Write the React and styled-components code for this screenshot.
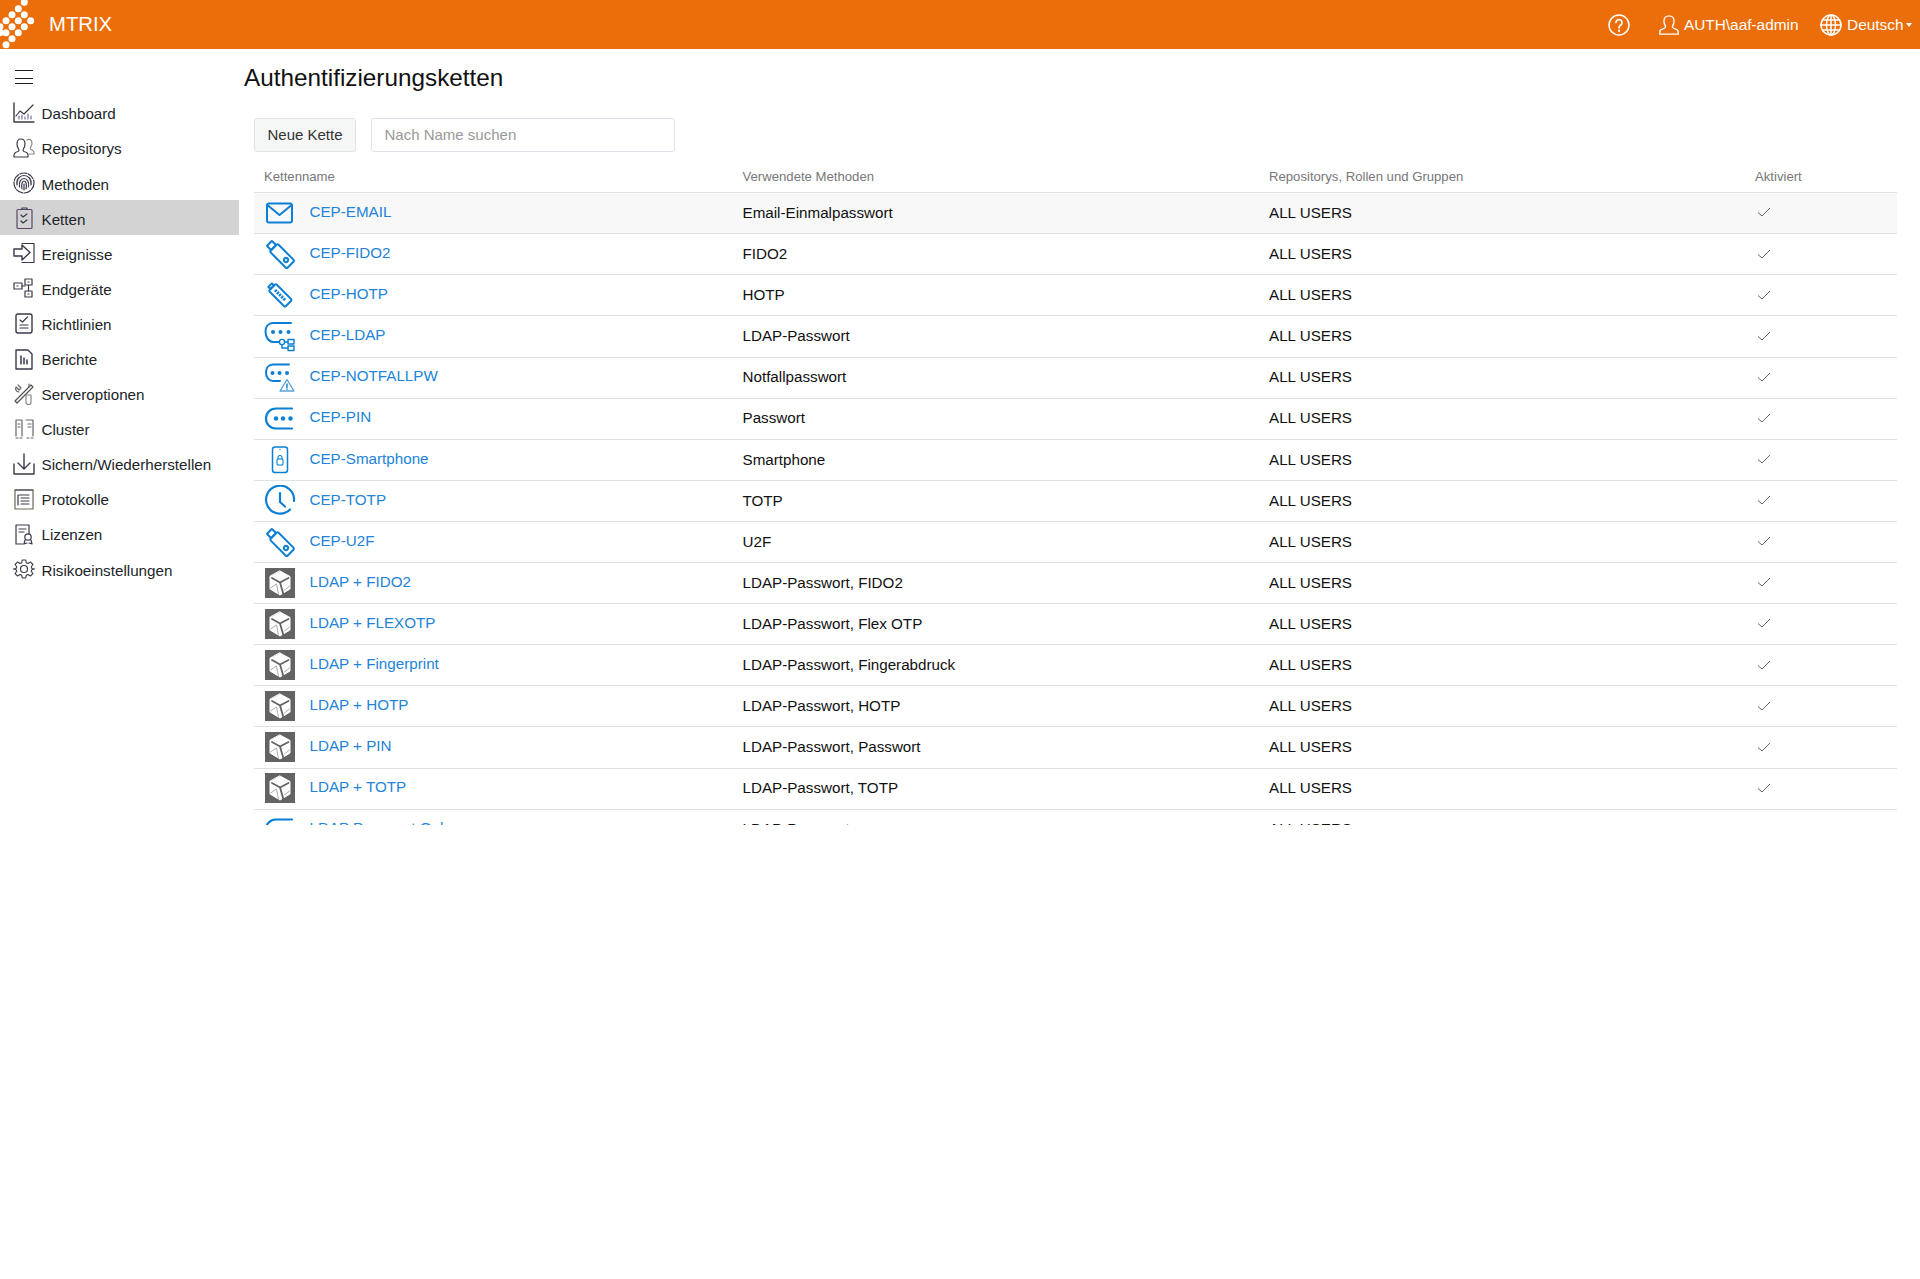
import React from "react";
import styled, { createGlobalStyle } from "styled-components";

const Global = createGlobalStyle`
  html, body { margin: 0; padding: 0; background: #fff; }
  body { font-family: "Liberation Sans", Arial, sans-serif; color: #212529; }
  #root { min-height: 1279px; }
  * { box-sizing: border-box; }
`;

const Page = styled.div`
  width: 1920px;
  height: 1279px;
  display: flex;
  flex-direction: column;
  overflow: hidden;
  background: #fff;
`;
const TopBar = styled.header`
  height: 49px;
  flex: none;
  background: #ec6e0a;
  color: #fff;
  display: flex;
  align-items: center;
  padding-right: 8px;
  overflow: hidden;
`;
const LogoSvg = styled.svg`
  width: 40px;
  height: 49px;
  flex: none;
  fill: #fff;
`;
const Brand = styled.div`
  font-size: 20.3px;
  margin-left: 9px;
  margin-top: -1px;
`;
const TopActions = styled.div`
  margin-left: auto;
  display: flex;
  align-items: center;
  font-size: 15.4px;
`;
const TopIcon = styled.svg`
  width: ${(p) => p.$size || 24}px;
  height: ${(p) => p.$size || 24}px;
  flex: none;
  fill: none;
  stroke: #fff;
  stroke-width: 1.5;
  stroke-linecap: round;
  stroke-linejoin: round;
`;
const HelpBtn = styled.div`
  display: flex;
  margin-right: 27px;
`;
const TopItem = styled.div`
  display: flex;
  align-items: center;
  gap: 4px;
  margin-right: ${(p) => p.$gap || 0}px;
`;
const Caret = styled.span`
  width: 0;
  height: 0;
  margin-left: -1.5px;
  border-left: 3.5px solid transparent;
  border-right: 3.5px solid transparent;
  border-top: 4px solid #fff;
`;
const Body = styled.div`
  flex: 1;
  display: flex;
  min-height: 0;
`;
const Sidebar = styled.nav`
  width: 239px;
  flex: none;
  padding-top: 45.8px;
  position: relative;
`;
const Burger = styled.button`
  position: absolute;
  left: 15px;
  top: 21px;
  width: 18px;
  height: 13.5px;
  padding: 0;
  border: 0;
  background: transparent;
  border-top: 1.7px solid #222;
  border-bottom: 1.7px solid #222;
  &::after {
    content: "";
    display: block;
    margin-top: 4.2px;
    border-top: 1.7px solid #222;
  }
`;
const NavItem = styled.div`
  height: 35.1px;
  display: flex;
  align-items: center;
  font-size: 15.2px;
  color: #212529;
  padding: 3px 0 0 12px;
  background: ${(p) => (p.$active ? "#d3d3d3" : "transparent")};
`;
const NavIcon = styled.svg`
  width: 24px;
  height: 24px;
  flex: none;
  margin-right: 5.5px;
  margin-top: -2px;
  fill: none;
  stroke: #3a3a4a;
  stroke-width: 1.2;
  stroke-linecap: round;
  stroke-linejoin: round;
`;
const Main = styled.main`
  flex: 1;
  min-width: 0;
  padding: 0 23px 0 15px;
`;
const Title = styled.h1`
  margin: 0 0 0 -10px;
  font-size: 24.3px;
  font-weight: 400;
  color: #111;
  line-height: 28px;
  padding-top: 15px;
`;
const Toolbar = styled.div`
  display: flex;
  gap: 15px;
  margin-top: 25.6px;
`;
const NewBtn = styled.button`
  width: 102px;
  height: 34.8px;
  background: #f6f7f7;
  border: 1.2px solid #dfe3e6;
  border-radius: 3px;
  font: 15px "Liberation Sans", Arial, sans-serif;
  color: #333;
  padding: 0;
`;
const Search = styled.input`
  width: 304px;
  height: 34.8px;
  border: 1.5px solid #dfe2e8;
  border-radius: 3px;
  padding: 0 12.5px;
  font: 15px "Liberation Sans", Arial, sans-serif;
  outline: none;
  &::placeholder { color: #999; opacity: 1; }
`;
const Table = styled.div`
  height: 672.9px;
  overflow: hidden;
`;
const Cols = styled.div`
  display: grid;
  grid-template-columns: 478.5px 526.5px 486px 1fr;
  align-items: center;
`;
const HeadRow = styled(Cols)`
  height: 40.8px;
  padding-top: 7.5px;
  border-bottom: 1.2px solid #dee2e6;
  font-size: 13.15px;
  color: #777;
`;
const HeadCell = styled.div`
  padding-left: 10px;
`;
const Row = styled(Cols)`
  height: 41.1px;
  padding-bottom: 1.5px;
  border-bottom: 1.2px solid #dee2e6;
  background: ${(p) => (p.$hover ? "#f8f8f8" : "#fff")};
  font-size: 15.2px;
  color: #111;
`;
const Cell = styled.div`
  padding-left: 10px;
  white-space: nowrap;
`;
const NameCell = styled(Cell)`
  display: flex;
  align-items: center;
`;
const RowIcon = styled.svg`
  width: 32px;
  height: 32px;
  flex: none;
  margin-top: 1px;
  fill: none;
  stroke: #0b7fd4;
  stroke-width: 2;
  stroke-linecap: round;
  stroke-linejoin: round;
`;
const LinkText = styled.a`
  color: #2283d8;
  margin-left: 13.5px;
  margin-top: -2px;
  text-decoration: none;
`;
const Check = styled.svg`
  display: block;
  margin-left: 0.5px;
  width: 16px;
  height: 16px;
  fill: none;
  stroke: #666;
  stroke-width: 1;
`;

const dots = [[24.3,2.3],[18.3,8.7],[12,14.7],[24.3,14.7],[6,20.7],[18.3,20.7],[30.7,20.7],[0,26.7],[12,26.7],[24.3,26.7],[0,32.7],[6,32.7],[18.3,32.7],[12,38.7],[6,44.7]];
const Logo = () => (
  <LogoSvg viewBox="0 0 40 49">
    {dots.map(([x, y]) => <circle key={`${x}-${y}`} cx={x} cy={y} r="3.5" />)}
  </LogoSvg>
);

const navIcons = {
  dash: <><path d="M2 2v19h20" strokeWidth="1.4"/><path d="M4 15l4-5 4 3 9-9" /><path d="M7 18v-3M10 18v-4M13 18v-2M16 18v-5M19 18v-3" stroke="#7a6fa0"/></>,
  users: <><path d="M2 21v-2c0-2 2-3 4-3.500 1-.4 1.300-1.500.6-2.500C5.500 11.500 5 10 5 8c0-3 1.700-5 4-5s4 2 4 5c0 2-.5 3.500-1.600 5-.7 1-.4 2.100.6 2.500 2 .5 4 1.500 4 3.500v2z"/><path d="M15 4c2-1.500 5-.5 5 3 0 2-.5 3-1.400 4.500-.6 1-.3 2 .6 2.300 1.500.5 2.800 1 2.800 3v1.200H17" stroke="#8a8a8a"/></>,
  finger: <><circle cx="12" cy="12" r="10" strokeDasharray="7 1.500"/><path d="M5 14c-1-6 3-9.500 7-9.500s8 3.500 7 9.500M7.500 16c-1-5 1.500-8.500 4.500-8.500s5.500 3.500 4.500 8.500M10 18c-.8-4 0-8 2-8s3 4 2 8M12 13v6"/></>,
  clip: <><rect x="5" y="3.500" width="15" height="19" rx="1" stroke="#5a4a6a"/><path d="M10 3.500V2h5v1.500"/><path d="M9 9l2 2 4-3M9 15l2 2 4-3"/></>,
  events: <><path d="M10 2.500h12v19H10" /><path d="M2 8h8V4l8 7.500-8 7.500v-4H2z" fill="#fff" strokeWidth="1.400"/></>,
  devices: <><rect x="2" y="7" width="8" height="6"/><rect x="13" y="3" width="7" height="6"/><rect x="13" y="15" width="7" height="6"/><path d="M10 10h3M16.500 9v6M5 10h1M16 6h1M16 18h1"/></>,
  rules: <><rect x="4" y="3" width="16" height="19" rx="2" strokeWidth="1.400"/><path d="M8 9l2.500 2 5-5M8 14h8M8 17h8"/></>,
  report: <><path d="M4 3h12l4 4v15H4z" strokeWidth="1.400"/><path d="M9 9v8M12 11v6M15 13v4" strokeWidth="1.500"/></>,
  server: <><path d="M3 19L19 3l2 2L5 21z" stroke="#555"/><path d="M6 3l3 3-2 2-3-3c-1 2 0 5 3 5M17 2v3" stroke="#666"/><path d="M14 13l5 0v7a2.500 2.500 0 01-5 0z" stroke="#888"/></>,
  cluster: <><path d="M4 19V3h6v16M14 3h7v16M4 21h2M8 21h2M15 21h2M19 21h2M6 7h2M6 10h2M16 7h3M16 10h3" stroke="#666"/></>,
  backup: <><path d="M2 12v10h20V12" strokeWidth="1.400"/><path d="M12 2v15M6 11l6 6 6-6" strokeWidth="1.400"/></>,
  log: <><rect x="3" y="3" width="18" height="19" stroke="#6a6a5a"/><path d="M3 3h18M7 8h10M9 11h8M9 14h8M9 17h8M6 8v10" /></>,
  license: <><path d="M17 12V3H4v19h7"/><path d="M7 7h7M7 10h5"/><circle cx="16" cy="15" r="3.200"/><path d="M13 18l-1 4 3-1M19 18l1 4-3-1"/></>,
  gear: <><circle cx="12" cy="12" r="3.500"/><path d="M10 2h4l.5 3 2 .9 2.600-1.700 2.800 2.800L20 9.500l.9 2 3 .5v0l-3 .5-.9 2 1.900 2.500-2.800 2.800-2.600-1.700-2 .9-.5 3h-4l-.5-3-2-.9-2.600 1.700-2.800-2.800L4 14.500l-.9-2L.100 12l3-.5.9-2L2.100 7l2.800-2.800L7.500 5.900l2-.9z" transform="translate(1.200 1.200) scale(.9)"/></>,
};

const navItems = [
  ["Dashboard", "dash"], ["Repositorys", "users"], ["Methoden", "finger"], ["Ketten", "clip", true],
  ["Ereignisse", "events"], ["Endgeräte", "devices"], ["Richtlinien", "rules"], ["Berichte", "report"],
  ["Serveroptionen", "server"], ["Cluster", "cluster"], ["Sichern/Wiederherstellen", "backup"],
  ["Protokolle", "log"], ["Lizenzen", "license"], ["Risikoeinstellungen", "gear"],
];

const Dots = ({ xs, y, r = 2 }) => (
  <g fill="#0b7fd4" stroke="none">
    {xs.map((x) => <circle key={x} cx={x} cy={y} r={r} />)}
  </g>
);

const rowIcons = {
  mail: <><rect x="3" y="6.500" width="25" height="19" rx="2"/><path d="M4 8.500l11.500 9.500L27 8.500"/></>,
  key: <g transform="rotate(45 16 16)"><rect x="7" y="10.500" width="24" height="11" rx="1.500"/><rect x="1" y="12.500" width="6" height="7" rx=".5"/><circle cx="24.500" cy="16" r="2.100"/></g>,
  hotp: <g transform="rotate(45 16 16)"><rect x="5" y="11" width="23" height="10" rx="1.500"/><rect x="2" y="13.500" width="3" height="5"/><path d="M9 16h15" strokeDasharray="2 1" strokeWidth="3" strokeLinecap="butt"/></g>,
  ldap: <><path d="M27 3H9C4.500 3 1.500 6.500 1.500 11.500S4.500 22 9 22h6" /><Dots xs={[9, 16.500, 24.500]} y={12} /><circle cx="18" cy="22" r="2.600" strokeWidth="1.400"/><rect x="24" y="19.500" width="6" height="4.500" strokeWidth="1.400"/><rect x="24" y="26" width="6" height="4.500" strokeWidth="1.400"/><path d="M20.600 22H24M18 24.600V28h6" strokeWidth="1.400"/></>,
  warn: <><path d="M25 3.500H9C4.500 3.500 2 7 2 11.500S4.500 20 9 20h7" /><Dots xs={[8.500, 15.500, 23]} y={12} /><path d="M23 18.500l7 11.500H16z" strokeWidth="1.400" stroke="#5aa5de" fill="#fff"/><path d="M23 23v3.500M23 28v.2" strokeWidth="1.400"/></>,
  pin: <><path d="M28 6.500H12C6 6.500 2 11 2 16.500S6 26.500 12 26.500h16" strokeWidth="2.200"/><Dots xs={[12, 19, 26.500]} y={16.500} r={2.200} /></>,
  phone: <><rect x="8.500" y="3" width="15" height="25.500" rx="2.500" strokeWidth="1.500"/><rect x="13" y="15" width="6" height="6" rx="1" strokeWidth="1.100"/><path d="M14 15v-1.500a2 2 0 014 0V15" strokeWidth="1.100"/><path d="M15.800 5.500h.4" strokeWidth="1"/></>,
  clock: <><path d="M26 24.500A14 14 0 1130 16" strokeWidth="2.200"/><path d="M16 8v9l5 4.500" strokeWidth="2.200"/></>,
};

const Cube = () => (
  <RowIcon viewBox="0 0 32 32">
    <rect x="1" y="1" width="30" height="30" fill="#636363" stroke="none"/>
    <path d="M16 4l10 5.500v12.500L16 28 6 22V9.500z" fill="#fff" stroke="#fff" strokeWidth="1"/>
    <path d="M16 15.500L8 11M16 15.500l8.500-4.500M16 15.500l3.500 12" stroke="#636363" strokeWidth="1.800" fill="none"/>
    <path d="M6.500 21l6-4 2 10.500M25.500 19l-5 4" stroke="#9a9a9a" strokeWidth=".8" fill="none"/>
  </RowIcon>
);

const rows = [
  ["CEP-EMAIL", "Email-Einmalpasswort", "mail"], ["CEP-FIDO2", "FIDO2", "key"], ["CEP-HOTP", "HOTP", "hotp"],
  ["CEP-LDAP", "LDAP-Passwort", "ldap"], ["CEP-NOTFALLPW", "Notfallpasswort", "warn"], ["CEP-PIN", "Passwort", "pin"],
  ["CEP-Smartphone", "Smartphone", "phone"], ["CEP-TOTP", "TOTP", "clock"], ["CEP-U2F", "U2F", "key"],
  ["LDAP + FIDO2", "LDAP-Passwort, FIDO2", "cube"], ["LDAP + FLEXOTP", "LDAP-Passwort, Flex OTP", "cube"],
  ["LDAP + Fingerprint", "LDAP-Passwort, Fingerabdruck", "cube"], ["LDAP + HOTP", "LDAP-Passwort, HOTP", "cube"],
  ["LDAP + PIN", "LDAP-Passwort, Passwort", "cube"], ["LDAP + TOTP", "LDAP-Passwort, TOTP", "cube"],
  ["LDAP Passwort Only", "LDAP-Passwort", "pin"],
];

export default function App() {
  return (
    <Page>
      <Global />
      <TopBar>
        <Logo />
        <Brand>MTRIX</Brand>
        <TopActions>
          <HelpBtn>
            <TopIcon viewBox="0 0 24 24">
              <circle cx="12" cy="12" r="10" />
              <path d="M9 9.500a3 3 0 115 2.300c-1.200.9-2 1.400-2 3" strokeWidth="1.700" />
              <path d="M12 17.500v.4" strokeWidth="2" />
            </TopIcon>
          </HelpBtn>
          <TopItem $gap={20.5}>
            <TopIcon viewBox="0 0 24 24" $size={22}>
              <path d="M2 22v-2.500c0-1.700 1.500-2.800 4-3.500 2-.6 2.700-1.800 2-3C6.800 11 6.500 9.500 6.500 7.500 6.500 4 9 2 12 2s5.500 2 5.500 5.500c0 2-.3 3.500-1.500 5.500-.7 1.200 0 2.400 2 3 2.500.7 4 1.800 4 3.500V22z" />
            </TopIcon>
            AUTH\aaf-admin
          </TopItem>
          <TopItem>
            <TopIcon viewBox="0 0 24 24">
              <circle cx="12" cy="12" r="10" />
              <ellipse cx="12" cy="12" rx="4.500" ry="10" />
              <path d="M12 2v20M2 12h20M3.500 7h17M3.500 17h17" />
            </TopIcon>
            Deutsch
            <Caret />
          </TopItem>
        </TopActions>
      </TopBar>
      <Body>
        <Sidebar>
          <Burger aria-label="Menü" />
          {navItems.map(([label, icon, active]) => (
            <NavItem key={label} $active={active}>
              <NavIcon viewBox="0 0 24 24">{navIcons[icon]}</NavIcon>
              {label}
            </NavItem>
          ))}
        </Sidebar>
        <Main>
          <Title>Authentifizierungsketten</Title>
          <Toolbar>
            <NewBtn>Neue Kette</NewBtn>
            <Search placeholder="Nach Name suchen" />
          </Toolbar>
          <Table>
            <HeadRow>
              <HeadCell>Kettenname</HeadCell>
              <HeadCell>Verwendete Methoden</HeadCell>
              <HeadCell>Repositorys, Rollen und Gruppen</HeadCell>
              <HeadCell>Aktiviert</HeadCell>
            </HeadRow>
            {rows.map(([name, method, icon], i) => (
              <Row key={name} $hover={i === 0}>
                <NameCell>
                  {icon === "cube" ? <Cube /> : <RowIcon viewBox="0 0 32 32">{rowIcons[icon]}</RowIcon>}
                  <LinkText href="#">{name}</LinkText>
                </NameCell>
                <Cell>{method}</Cell>
                <Cell>ALL USERS</Cell>
                <Cell>
                  <Check viewBox="0 0 16 16"><path d="M2 8.500l4 3.500 8-8" /></Check>
                </Cell>
              </Row>
            ))}
          </Table>
        </Main>
      </Body>
    </Page>
  );
}
